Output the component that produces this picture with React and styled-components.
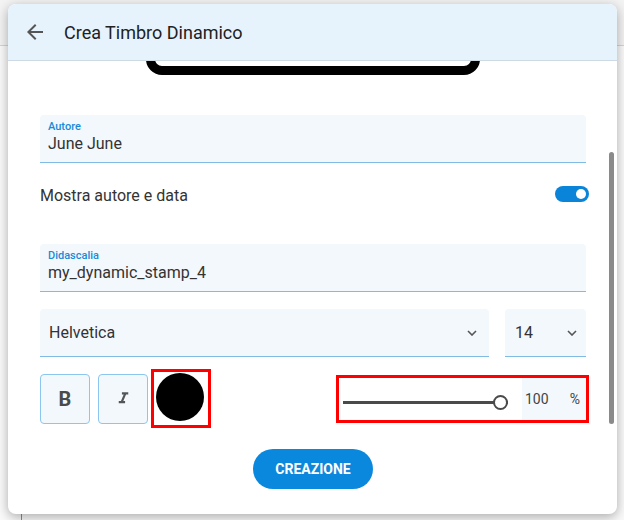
import React, { useLayoutEffect, useRef } from 'react';
import styled, { createGlobalStyle } from 'styled-components';

const GlobalStyle = createGlobalStyle`
  body {
    margin: 0;
    font-family: Roboto, "Liberation Sans", sans-serif;
    background: #fafafa;
  }
  * { box-sizing: border-box; }
`;

const Backdrop = styled.div`
  position: relative;
  width: 624px;
  height: 520px;
  overflow: hidden;
  background: #fafafa;
`;

const PageBar = styled.div`
  height: 46px;
  background: #f3f3f3;
  border-bottom: 1px solid #d4d4d4;
`;

const PageRail = styled.div`
  width: 22px;
  height: 474px;
  border-right: 1px solid #8c8c8c;
`;

const Dialog = styled.div`
  position: absolute;
  top: 4px;
  left: 8px;
  width: 609px;
  height: 510px;
  background: #fff;
  border-radius: 8px;
  box-shadow: 0 3px 12px rgba(0, 0, 0, 0.32);
  overflow: hidden;
  display: flex;
  flex-direction: column;
`;

const Header = styled.div`
  height: 57px;
  flex-shrink: 0;
  display: flex;
  align-items: center;
  gap: 17px;
  padding-left: 15px;
  background: #e6f3fd;
  border-bottom: 1px solid #cdd9e4;
`;

const Title = styled.h1`
  margin: 0;
  font-size: 18px;
  font-weight: 400;
  color: #212121;
`;

const Body = styled.div`
  flex: 1;
  overflow: hidden;
  padding: 0 31px 175px 32px;
`;

const ScrollThumb = styled.div`
  position: absolute;
  right: 3px;
  top: 148px;
  width: 5px;
  height: 272px;
  border-radius: 3px;
  background: #8a8a8a;
`;

const PreviewWrap = styled.div`
  padding-top: 16px;
  display: flex;
  justify-content: center;
`;

const StampBox = styled.div`
  width: 334px;
  height: 149px;
  border: 9px solid #000;
  border-radius: 16px;
`;

const Field = styled.div`
  margin-top: ${p => p.$top}px;
  height: 48px;
  padding: 5px 8px 0;
  background: #f3f8fc;
  border-bottom: 1px solid #7fbbe3;
  border-radius: 4px 4px 0 0;
`;

const FieldLabel = styled.div`
  font-size: 11px;
  line-height: 13px;
  font-weight: 500;
  color: #1a8ad8;
`;

const FieldValue = styled.div`
  margin-top: 1px;
  font-size: 16px;
  line-height: 19px;
  color: #333;
`;

const ToggleRow = styled.div`
  margin-top: 16px;
  height: 32px;
  display: flex;
  align-items: center;
  justify-content: space-between;
  font-size: 16px;
  color: #333;
`;

const Toggle = styled.div`
  width: 34px;
  height: 16px;
  margin: -3px -3px 0 0;
  border-radius: 8px;
  background: #0a84d8;
  display: flex;
  align-items: center;
  justify-content: flex-end;
  padding-right: 3px;
`;

const Knob = styled.div`
  width: 10px;
  height: 10px;
  border-radius: 50%;
  background: #fff;
`;

const SelectRow = styled.div`
  margin-top: 17px;
  display: flex;
  gap: 16px;
`;

const Select = styled.div`
  flex: ${p => (p.$grow ? 1 : 'none')};
  width: ${p => (p.$grow ? 'auto' : '81px')};
  height: 48px;
  display: flex;
  align-items: center;
  justify-content: space-between;
  padding: 0 ${p => (p.$grow ? 12 : 9)}px 0 ${p => (p.$grow ? 9 : 10)}px;
  background: #f3f8fc;
  border-bottom: 1px solid #7fbbe3;
  border-radius: 4px 4px 0 0;
  font-size: 16px;
  color: #333;
`;

const FormatRow = styled.div`
  margin-top: 12px;
  height: 59px;
  display: flex;
  align-items: center;
`;

const FormatGroup = styled.div`
  display: flex;
  gap: 8px;
`;

const FormatButton = styled.button`
  width: 50px;
  height: 50px;
  padding: 0;
  display: flex;
  align-items: center;
  justify-content: center;
  background: #f3f8fc;
  border: 1px solid #8cc6ee;
  border-radius: 4px;
  font-family: Roboto, "Liberation Sans", sans-serif;
  font-size: 20px;
  font-weight: 700;
  color: #4a4a4a;
`;

const Swatch = styled.div`
  margin-left: 3px;
  width: 60px;
  height: 59px;
  border: 3px solid #f00;
  padding: 1px 0 0 2px;
`;

const Dot = styled.div`
  width: 48px;
  height: 48px;
  border-radius: 50%;
  background: ${p => p.$color};
`;

const SliderBox = styled.div`
  margin-left: auto;
  margin-right: -3px;
  width: 253px;
  height: 48px;
  border: 3px solid #f00;
  display: flex;
  align-items: center;
`;

const SliderArea = styled.div`
  flex: 1;
  padding: 0 14px 0 4px;
`;

const Track = styled.div`
  position: relative;
  margin-top: 8px;
  height: 3px;
  background: #4a4a4a;
`;

const Thumb = styled.div`
  position: absolute;
  right: 0;
  top: -6px;
  width: 15px;
  height: 15px;
  border-radius: 50%;
  background: #fff;
  border: 2px solid #4a4a4a;
`;

const Percent = styled.div`
  width: 64px;
  height: 100%;
  display: flex;
  align-items: center;
  justify-content: space-between;
  padding: 0 6px 0 3px;
  background: #f3f8fc;
  font-size: 14px;
  color: #444;
`;

const Actions = styled.div`
  margin-top: 21px;
  display: flex;
  justify-content: center;
`;

const CreateButton = styled.button`
  width: 120px;
  height: 40px;
  border: none;
  border-radius: 20px;
  background: #0a88de;
  color: #fff;
  font-family: Roboto, "Liberation Sans", sans-serif;
  font-size: 14px;
  font-weight: 700;
`;

const Chevron = () => (
  <svg width="10" height="6" viewBox="0 0 10 6">
    <polyline points="1,1 5,5 9,1" fill="none" stroke="#555" strokeWidth="1.6" />
  </svg>
);

const ARROW_BACK = 'M20 11H7.83l5.59-5.59L12 4l-8 8 8 8 1.41-1.41L7.83 13H20v-2z';
const ITALIC = 'M10 4v3h2.21l-3.42 8H6v3h8v-3h-2.21l3.42-8H18V4z';

export default function App() {
  const bodyRef = useRef(null);

  useLayoutEffect(() => {
    if (bodyRef.current) bodyRef.current.scrollTop = 151;
  }, []);

  return (
    <Backdrop>
      <GlobalStyle />
      <PageBar />
      <PageRail />
      <Dialog>
        <Header>
          <svg width="24" height="24" viewBox="0 0 24 24">
            <path d={ARROW_BACK} fill="#555" />
          </svg>
          <Title>Crea Timbro Dinamico</Title>
        </Header>
        <Body ref={bodyRef}>
          <PreviewWrap>
            <StampBox />
          </PreviewWrap>

          <Field $top={40}>
            <FieldLabel>Autore</FieldLabel>
            <FieldValue>June June</FieldValue>
          </Field>

          <ToggleRow>
            <span>Mostra autore e data</span>
            <Toggle><Knob /></Toggle>
          </ToggleRow>

          <Field $top={33}>
            <FieldLabel>Didascalia</FieldLabel>
            <FieldValue>my_dynamic_stamp_4</FieldValue>
          </Field>

          <SelectRow>
            <Select $grow>
              <span>Helvetica</span>
              <Chevron />
            </Select>
            <Select>
              <span>14</span>
              <Chevron />
            </Select>
          </SelectRow>

          <FormatRow>
            <FormatGroup>
              <FormatButton>B</FormatButton>
              <FormatButton>
                <svg width="19" height="19" viewBox="0 0 24 24">
                  <path d={ITALIC} fill="#555" />
                </svg>
              </FormatButton>
            </FormatGroup>
            <Swatch><Dot $color="#000" /></Swatch>
            <SliderBox>
              <SliderArea>
                <Track><Thumb /></Track>
              </SliderArea>
              <Percent>
                <span>100</span>
                <span>%</span>
              </Percent>
            </SliderBox>
          </FormatRow>

          <Actions>
            <CreateButton>CREAZIONE</CreateButton>
          </Actions>
        </Body>
        <ScrollThumb />
      </Dialog>
    </Backdrop>
  );
}
